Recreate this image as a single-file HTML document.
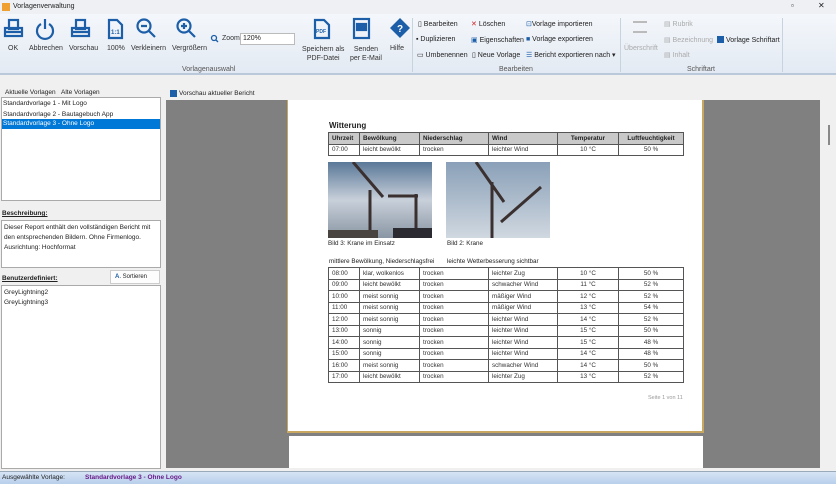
<!DOCTYPE html>
<html><head><meta charset="utf-8"><style>
*{margin:0;padding:0;box-sizing:border-box}
body{width:836px;height:484px;overflow:hidden;font-family:"Liberation Sans",sans-serif;font-size:7px;color:#222;background:#f0f0f0;position:relative}
.a{position:absolute;white-space:nowrap}
.rb{font-size:7px;color:#333;text-align:center}
table{border-collapse:collapse;position:absolute;font-size:6.3px}
td{border:1px solid #555;padding:0 3px;height:11.5px;color:#333}
.h td{background:#c9c9c9;font-weight:bold;color:#222}
.c{text-align:center}
.ic{position:absolute}
</style></head><body>
<div class="a" style="left:0;top:0;width:836px;height:14px;background:#eef0f4"></div>
<div class="a" style="left:2px;top:3px;width:8px;height:8px;background:#f0a030"></div>
<div class="a" style="left:13px;top:3px;font-size:7px">Vorlagenverwaltung</div>
<div class="a" style="left:791px;top:1px;font-size:8px">▫</div>
<div class="a" style="left:818px;top:1px;font-size:8px">✕</div>
<div class="a" style="left:0;top:14px;width:836px;height:61px;background:linear-gradient(#f4f7fb,#e3eaf3);border-bottom:2px solid #b9c8da"></div>
<svg class="ic" style="left:0;top:0" width="420" height="45">
<g fill="none" stroke="#1d5ea8" stroke-width="2.2">
<rect x="5" y="28" width="17" height="8"/><rect x="9" y="20" width="9" height="9"/><path d="M5 32h17"/>
<path d="M41 24a8 8 0 1 0 8 0M45 19v10"/>
<rect x="72" y="28" width="17" height="8"/><rect x="76" y="20" width="9" height="9"/><path d="M72 32h17"/>
<path d="M109 20h8l5 5v13h-13z"/>
<circle cx="144" cy="26" r="6.5"/><path d="M149 31l6 6M141 26h6"/>
<circle cx="184" cy="26" r="6.5"/><path d="M189 31l6 6M181 26h6M184 23v6"/>
<circle cx="214" cy="38" r="2.5" stroke-width="1.3"/><path d="M216 40l2 2" stroke-width="1.3"/>
<path d="M315 20h9l5 5v13h-14z"/>
<rect x="354" y="19" width="15" height="19"/><rect x="357" y="24" width="9" height="6" fill="#1d5ea8"/>
</g>
<path d="M400 18l10 10-10 10-10-10z" fill="#1d5ea8"/><text x="397" y="32" fill="#fff" font-size="10" font-weight="bold">?</text>
<text x="111" y="34" fill="#1d5ea8" font-size="6" font-weight="bold">1:1</text>
<text x="316" y="33" fill="#1d5ea8" font-size="5" font-weight="bold">PDF</text>
</svg>
<div class="a rb" style="left:8px;top:45px">OK</div>
<div class="a rb" style="left:29px;top:45px">Abbrechen</div>
<div class="a rb" style="left:69px;top:45px">Vorschau</div>
<div class="a rb" style="left:107px;top:45px">100%</div>
<div class="a rb" style="left:131px;top:45px">Verkleinern</div>
<div class="a rb" style="left:172px;top:45px">Vergrößern</div>
<div class="a" style="left:222px;top:35px;color:#333">Zoom</div>
<div class="a" style="left:240px;top:33px;width:55px;height:12px;background:#fff;border:1px solid #bbb;padding:1px 2px">120%</div>
<div class="a rb" style="left:302px;top:45px;line-height:9px">Speichern als<br>PDF-Datei</div>
<div class="a rb" style="left:350px;top:45px;line-height:9px">Senden<br>per E-Mail</div>
<div class="a rb" style="left:390px;top:45px">Hilfe</div>
<div class="a rb" style="left:182px;top:66px;color:#555">Vorlagenauswahl</div>
<div class="a" style="left:412px;top:18px;width:1px;height:54px;background:#c8d3e0"></div>
<div class="a" style="left:620px;top:18px;width:1px;height:54px;background:#c8d3e0"></div>
<div class="a" style="left:782px;top:18px;width:1px;height:54px;background:#c8d3e0"></div>
<div class="a" style="left:418px;top:20px">▯ Bearbeiten</div>
<div class="a" style="left:416px;top:36px">▪ Duplizieren</div>
<div class="a" style="left:417px;top:51px">▭ Umbenennen</div>
<div class="a" style="left:471px;top:20px"><span style="color:#c22">✕</span> Löschen</div>
<div class="a" style="left:471px;top:36px"><span style="color:#1d5ea8">▣</span> Eigenschaften</div>
<div class="a" style="left:472px;top:51px">▯ Neue Vorlage</div>
<div class="a" style="left:526px;top:20px"><span style="color:#1d5ea8">⊡</span>Vorlage importieren</div>
<div class="a" style="left:526px;top:36px"><span style="color:#1d5ea8">■</span> Vorlage exportieren</div>
<div class="a" style="left:526px;top:51px"><span style="color:#1d5ea8">☰</span> Bericht exportieren nach ▾</div>
<div class="a rb" style="left:499px;top:66px;color:#555">Bearbeiten</div>
<div class="a" style="left:633px;top:21px;width:14px;height:12px;border-top:2px solid #bbb;border-bottom:2px solid #bbb"></div>
<div class="a" style="left:624px;top:45px;color:#aaa">Überschrift</div>
<div class="a" style="left:664px;top:20px;color:#aaa">▤ Rubrik</div>
<div class="a" style="left:664px;top:36px;color:#aaa">▤ Bezeichnung</div>
<div class="a" style="left:664px;top:51px;color:#aaa">▤ Inhalt</div>
<div class="a" style="left:717px;top:36px"><span style="display:inline-block;width:7px;height:7px;background:#1d5ea8;vertical-align:-1px"></span> Vorlage Schriftart</div>
<div class="a rb" style="left:687px;top:66px;color:#555">Schriftart</div>
<div class="a" style="left:5px;top:89px;font-size:6.5px">Aktuelle Vorlagen&nbsp;&nbsp;&nbsp;Alte Vorlagen</div>
<div class="a" style="left:1px;top:97px;width:160px;height:104px;background:#fff;border:1px solid #aaa"></div>
<div class="a" style="left:3px;top:99px;font-size:6.5px;line-height:10.5px">Standardvorlage 1 - Mit Logo<br>Standardvorlage 2 - Bautagebuch App</div>
<div class="a" style="left:2px;top:119px;width:158px;height:10px;background:#0078d7;color:#fff;font-size:6.5px;padding:1px 1px">Standardvorlage 3 - Ohne Logo</div>
<div class="a" style="left:2px;top:210px;font-weight:bold;text-decoration:underline;font-size:6.5px">Beschreibung:</div>
<div class="a" style="left:1px;top:220px;width:160px;height:48px;background:#fff;border:1px solid #aaa;padding:2px;font-size:6.5px;line-height:10px;white-space:normal">Dieser Report enthält den vollständigen Bericht mit den entsprechenden Bildern. Ohne Firmenlogo. Ausrichtung: Hochformat</div>
<div class="a" style="left:2px;top:275px;font-weight:bold;text-decoration:underline;font-size:6.5px">Benutzerdefiniert:</div>
<div class="a" style="left:110px;top:270px;width:50px;height:14px;background:#fdfdfd;border:1px solid #ccc;font-size:6px;padding:3px 4px"><b style="color:#1d5ea8">A</b>. Sortieren</div>
<div class="a" style="left:1px;top:285px;width:160px;height:184px;background:#fff;border:1px solid #aaa;padding:2px;font-size:6.5px;line-height:10px">GreyLightning2<br>GreyLightning3</div>
<div class="a" style="left:170px;top:90px;width:7px;height:7px;background:#1d5ea8"></div>
<div class="a" style="left:179px;top:90px;font-size:6.5px">Vorschau aktueller Bericht</div>
<div class="a" style="left:166px;top:100px;width:654px;height:368px;background:#808080"></div>
<div class="a" style="left:820px;top:100px;width:14px;height:368px;background:#f0f0f0"></div>
<div class="a" style="left:828px;top:125px;width:2px;height:20px;background:#888"></div>
<div class="a" style="left:287px;top:100px;width:417px;height:333px;background:#fff;border-left:1px solid #c8a860;border-right:2px solid #c8a860;border-bottom:2px solid #c8a860"></div>
<div class="a" style="left:289px;top:436px;width:414px;height:32px;background:#fff"></div>
<div class="a" style="left:329px;top:121px;font-size:8px;font-weight:bold">Witterung</div>
<table style="left:328px;top:132px;width:356px">
<tr class="h"><td style="width:31px">Uhrzeit</td><td style="width:60px">Bewölkung</td><td style="width:69px">Niederschlag</td><td style="width:69px">Wind</td><td class="c" style="width:61px">Temperatur</td><td class="c">Luftfeuchtigkeit</td></tr>
<tr><td>07:00</td><td>leicht bewölkt</td><td>trocken</td><td>leichter Wind</td><td class="c">10 °C</td><td class="c">50 %</td></tr>
</table>
<svg class="a" style="left:328px;top:162px" width="104" height="76"><defs><linearGradient id="s" x1="0" y1="0" x2="0" y2="1"><stop offset="0" stop-color="#5a7898"/><stop offset=".5" stop-color="#c8d0da"/><stop offset="1" stop-color="#8a96a4"/></linearGradient></defs><rect width="104" height="76" fill="url(#s)"/><path d="M25 0l30 35M42 28v48M60 34h30M88 32v38" stroke="#3a3030" stroke-width="3" fill="none"/><rect x="65" y="66" width="39" height="10" fill="#2a2a30"/><rect x="0" y="68" width="50" height="8" fill="#4a4440"/></svg>
<svg class="a" style="left:446px;top:162px" width="104" height="76"><defs><linearGradient id="t" x1="0" y1="0" x2="0" y2="1"><stop offset="0" stop-color="#8aa0b8"/><stop offset="1" stop-color="#d0d8e0"/></linearGradient></defs><rect width="104" height="76" fill="url(#t)"/><path d="M30 0l28 40M46 20v56M55 60l40-35" stroke="#3a3030" stroke-width="3" fill="none"/></svg>
<div class="a" style="left:328px;top:240px;font-size:6.3px">Bild 3: Krane im Einsatz</div>
<div class="a" style="left:447px;top:240px;font-size:6.3px">Bild 2: Krane</div>
<div class="a" style="left:329px;top:258px;font-size:6.3px">mittlere Bewölkung, Niederschlagsfrei</div>
<div class="a" style="left:447px;top:258px;font-size:6.3px">leichte Wetterbesserung sichtbar</div>
<table style="left:328px;top:267px;width:356px">
<tr><td style="width:31px">08:00</td><td style="width:60px">klar, wolkenlos</td><td style="width:69px">trocken</td><td style="width:69px">leichter Zug</td><td class="c" style="width:61px">10 °C</td><td class="c">50 %</td></tr>
<tr><td>09:00</td><td>leicht bewölkt</td><td>trocken</td><td>schwacher Wind</td><td class="c">11 °C</td><td class="c">52 %</td></tr>
<tr><td>10:00</td><td>meist sonnig</td><td>trocken</td><td>mäßiger Wind</td><td class="c">12 °C</td><td class="c">52 %</td></tr>
<tr><td>11:00</td><td>meist sonnig</td><td>trocken</td><td>mäßiger Wind</td><td class="c">13 °C</td><td class="c">54 %</td></tr>
<tr><td>12:00</td><td>meist sonnig</td><td>trocken</td><td>leichter Wind</td><td class="c">14 °C</td><td class="c">52 %</td></tr>
<tr><td>13:00</td><td>sonnig</td><td>trocken</td><td>leichter Wind</td><td class="c">15 °C</td><td class="c">50 %</td></tr>
<tr><td>14:00</td><td>sonnig</td><td>trocken</td><td>leichter Wind</td><td class="c">15 °C</td><td class="c">48 %</td></tr>
<tr><td>15:00</td><td>sonnig</td><td>trocken</td><td>leichter Wind</td><td class="c">14 °C</td><td class="c">48 %</td></tr>
<tr><td>16:00</td><td>meist sonnig</td><td>trocken</td><td>schwacher Wind</td><td class="c">14 °C</td><td class="c">50 %</td></tr>
<tr><td>17:00</td><td>leicht bewölkt</td><td>trocken</td><td>leichter Zug</td><td class="c">13 °C</td><td class="c">52 %</td></tr>
</table>
<div class="a" style="left:648px;top:395px;font-size:5.5px;color:#999">Seite 1 von 11</div>
<div class="a" style="left:0;top:471px;width:836px;height:13px;background:linear-gradient(#d6e4f5,#b8cfeb);border-top:1px solid #9ab"></div>
<div class="a" style="left:2px;top:474px;font-size:6.5px">Ausgewählte Vorlage:</div>
<div class="a" style="left:85px;top:474px;font-size:6.5px;font-weight:bold;color:#6a1a8a">Standardvorlage 3 - Ohne Logo</div>
</body></html>
